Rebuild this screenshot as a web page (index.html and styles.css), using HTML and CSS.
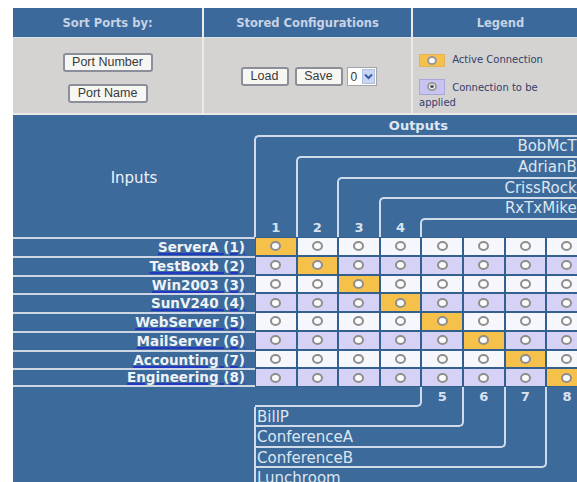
FILE: index.html
```html
<!DOCTYPE html>
<html lang="en">
<head>
<meta charset="utf-8">
<title>Port Matrix</title>
<link rel="stylesheet" href="styles.css">
</head>
<body>
<div class="page">
  <div class="panel">
    <div class="ph">Sort Ports by:</div>
    <div class="ph sep">Stored Configurations</div>
    <div class="ph sep">Legend</div>

    <div class="pb sort">
      <button class="btn btn-num">Port Number</button>
      <button class="btn btn-name">Port Name</button>
    </div>
    <div class="pb sep stored">
      <button class="btn btn-load">Load</button>
      <button class="btn btn-save">Save</button>
      <span class="sel"><span class="sel-val">0</span><span class="sel-arrow"><svg width="9" height="7" viewBox="0 0 9 7"><path d="M1 1.5 L4.5 5 L8 1.5" fill="none" stroke="#3a5aa8" stroke-width="2"/></svg></span></span>
    </div>
    <div class="pb sep legend">
      <div class="lg"><span class="sw sw-active"><i class="ring"></i></span> Active Connection</div>
      <div class="lg lg2"><span class="sw sw-pending"><i class="ring ring-dot"></i></span> Connection to be applied</div>
    </div>
  </div>

  <div class="matrix">
    <div class="inputs-head">Inputs</div>
    <div class="outputs-head">Outputs</div>

    <!-- output brackets above the grid -->
    <div class="tbox t1"></div>
    <div class="tbox t2"></div>
    <div class="tbox t3"></div>
    <div class="tbox t4"></div>
    <div class="tbox t5"></div>
    <div class="olab o1">BobMcT</div>
    <div class="olab o2">AdrianB</div>
    <div class="olab o3">CrissRock</div>
    <div class="olab o4">RxTxMike</div>
    <div class="num n1">1</div>
    <div class="num n2">2</div>
    <div class="num n3">3</div>
    <div class="num n4">4</div>

    <!-- input rows -->
    <div class="row r1 light">
      <div class="in"><a href="#">ServerA (1)</a></div>
      <div class="c on"><i></i></div><div class="c"><i></i></div><div class="c"><i></i></div><div class="c"><i></i></div><div class="c"><i></i></div><div class="c"><i></i></div><div class="c"><i></i></div><div class="c"><i></i></div>
    </div>
    <div class="row r2 lav">
      <div class="in"><a href="#">TestBoxb (2)</a></div>
      <div class="c"><i></i></div><div class="c on"><i></i></div><div class="c"><i></i></div><div class="c"><i></i></div><div class="c"><i></i></div><div class="c"><i></i></div><div class="c"><i></i></div><div class="c"><i></i></div>
    </div>
    <div class="row r3 light">
      <div class="in"><a href="#">Win2003 (3)</a></div>
      <div class="c"><i></i></div><div class="c"><i></i></div><div class="c on"><i></i></div><div class="c"><i></i></div><div class="c"><i></i></div><div class="c"><i></i></div><div class="c"><i></i></div><div class="c"><i></i></div>
    </div>
    <div class="row r4 lav">
      <div class="in"><a href="#">SunV240 (4)</a></div>
      <div class="c"><i></i></div><div class="c"><i></i></div><div class="c"><i></i></div><div class="c on"><i></i></div><div class="c"><i></i></div><div class="c"><i></i></div><div class="c"><i></i></div><div class="c"><i></i></div>
    </div>
    <div class="row r5 light">
      <div class="in"><a href="#">WebServer (5)</a></div>
      <div class="c"><i></i></div><div class="c"><i></i></div><div class="c"><i></i></div><div class="c"><i></i></div><div class="c on"><i></i></div><div class="c"><i></i></div><div class="c"><i></i></div><div class="c"><i></i></div>
    </div>
    <div class="row r6 lav">
      <div class="in"><a href="#">MailServer (6)</a></div>
      <div class="c"><i></i></div><div class="c"><i></i></div><div class="c"><i></i></div><div class="c"><i></i></div><div class="c"><i></i></div><div class="c on"><i></i></div><div class="c"><i></i></div><div class="c"><i></i></div>
    </div>
    <div class="row r7 light">
      <div class="in"><a href="#">Accounting (7)</a></div>
      <div class="c"><i></i></div><div class="c"><i></i></div><div class="c"><i></i></div><div class="c"><i></i></div><div class="c"><i></i></div><div class="c"><i></i></div><div class="c on"><i></i></div><div class="c"><i></i></div>
    </div>
    <div class="row r8 lav last">
      <div class="in"><a href="#">Engineering (8)</a></div>
      <div class="c"><i></i></div><div class="c"><i></i></div><div class="c"><i></i></div><div class="c"><i></i></div><div class="c"><i></i></div><div class="c"><i></i></div><div class="c"><i></i></div><div class="c on"><i></i></div>
    </div>

    <!-- output brackets below the grid -->
    <div class="num n5">5</div>
    <div class="num n6">6</div>
    <div class="num n7">7</div>
    <div class="num n8">8</div>
    <div class="bbox b4"></div>
    <div class="bbox b5"></div>
    <div class="bbox b6"></div>
    <div class="bbox b7"></div>
    <div class="blab l1">BillP</div>
    <div class="blab l2">ConferenceA</div>
    <div class="blab l3">ConferenceB</div>
    <div class="blab l4">Lunchroom</div>
  </div>
</div>
</body>
</html>
```

FILE: styles.css
```css
html, body {
  margin: 0;
  padding: 0;
  background: #ffffff;
}

body {
  width: 577px;
  height: 482px;
  overflow: hidden;
  font-family: "DejaVu Sans", Verdana, sans-serif;
}

.page {
  margin: 8px 0 0 13px;
  width: 575px;
}

/* ---------- control panel ---------- */
.panel {
  display: grid;
  grid-template-columns: 189px 209px 177px;
  grid-template-rows: 30px 77px;
}

.ph {
  background: #3b699b;
  color: #c7d3e5;
  font-size: 11.5px;
  font-weight: bold;
  display: flex;
  align-items: center;
  justify-content: center;
  border-bottom: 1px solid #d9e1ea;
  box-sizing: border-box;
}

.sep {
  border-left: 2px solid #ecebea;
}

.pb {
  background: #d4d3d1;
  border-bottom: 2px solid #eceae6;
  box-sizing: border-box;
}

.btn {
  font-family: "Liberation Sans", Arial, sans-serif;
  font-size: 12.5px;
  color: #3a3a3a;
  background: #f6f6f2;
  border: 2px solid #8c8e99;
  border-radius: 3px;
  height: 19px;
  padding: 0;
  line-height: 15px;
  box-sizing: border-box;
}

.sort {
  display: flex;
  flex-direction: column;
  align-items: center;
  padding-top: 15px;
  gap: 12px;
}

.btn-num { width: 90px; }
.btn-name { width: 80px; }

.stored {
  display: flex;
  align-items: center;
  justify-content: center;
  padding: 2px 0 0 2px;
}

.btn-load { width: 48px; margin-right: 6px; }
.btn-save { width: 48px; margin-right: 4px; }

.sel {
  display: inline-flex;
  align-items: center;
  width: 30px;
  height: 19px;
  box-sizing: border-box;
  background: #ffffff;
  border: 1px solid #a5a5a5;
  font-family: "Liberation Sans", Arial, sans-serif;
  font-size: 12px;
  color: #333;
}

.sel-val {
  flex: 1;
  padding-left: 3px;
}

.sel-arrow {
  width: 13px;
  height: 15px;
  margin-right: 1px;
  background: #c9d6f2;
  border: 1px solid #b0c0e2;
  box-sizing: border-box;
  display: flex;
  align-items: center;
  justify-content: center;
}

.legend {
  padding: 15px 24px 0 6px;
  font-size: 10px;
  line-height: 13px;
  color: #33406c;
}

.lg2 {
  margin-top: 13px;
}

.sw {
  display: inline-flex;
  align-items: center;
  justify-content: center;
  width: 26px;
  box-sizing: border-box;
  vertical-align: middle;
  margin-right: 4px;
}

.sw-active {
  height: 13px;
  background: #f5c04c;
  border: 1px solid #e4b35a;
}

.sw-pending {
  height: 16px;
  background: #c8c4f2;
  border: 1px solid #a9a6dc;
  position: relative;
  top: -1px;
}

.ring {
  display: block;
  width: 10px;
  height: 9px;
  box-sizing: border-box;
  border: 2px solid #9a9a9a;
  border-radius: 50%;
  background: #ffffff;
}

.ring-dot {
  background: radial-gradient(circle, #55586a 0 1.5px, #ffffff 2px);
}

/* ---------- routing matrix ---------- */
.matrix {
  --cols: 242px repeat(8, 41.6px);
  display: grid;
  grid-template-columns: var(--cols);
  grid-template-rows: 20px 21px 21px 20px 21px 19px repeat(8, 18.75px) 20px 20px 21px 20px 21px;
  background: #3c6a9b;
  color: #dde6f0;
}

.inputs-head {
  grid-column: 1;
  grid-row: 1 / 7;
  display: flex;
  align-items: center;
  justify-content: center;
  font-size: 15px;
  color: #eef2f7;
  padding-top: 3px;
}

.outputs-head {
  grid-column: 2 / -1;
  grid-row: 1;
  text-align: center;
  font-size: 13px;
  font-weight: bold;
  line-height: 22px;
  color: #dfe7f1;
  padding-right: 6px;
}

.tbox {
  border-left: 2px solid #cfdaea;
  border-top: 2px solid #cfdaea;
  border-top-left-radius: 5px;
  margin-left: -1px;
}

.t1 { grid-column: 2 / -1; grid-row: 2 / 7; }
.t2 { grid-column: 3 / -1; grid-row: 3 / 7; }
.t3 { grid-column: 4 / -1; grid-row: 4 / 7; }
.t4 { grid-column: 5 / -1; grid-row: 5 / 7; }
.t5 { grid-column: 6 / -1; grid-row: 6 / 7; }

.olab {
  grid-column: 2 / -1;
  text-align: right;
  padding-right: 11px;
  font-size: 15px;
  line-height: 23px;
  white-space: nowrap;
  overflow: hidden;
}

.o1 { grid-row: 2; }
.o2 { grid-row: 3; }
.o3 { grid-row: 4; }
.o4 { grid-row: 5; }

.num {
  text-align: center;
  font-size: 13px;
  font-weight: bold;
  color: #d9e2ee;
  line-height: 20px;
}

.n1 { grid-column: 2; grid-row: 6; }
.n2 { grid-column: 3; grid-row: 6; }
.n3 { grid-column: 4; grid-row: 6; }
.n4 { grid-column: 5; grid-row: 6; }
.n5 { grid-column: 6; grid-row: 15; }
.n6 { grid-column: 7; grid-row: 15; }
.n7 { grid-column: 8; grid-row: 15; }
.n8 { grid-column: 9; grid-row: 15; }

.row {
  grid-column: 1 / -1;
  display: grid;
  grid-template-columns: var(--cols);
}

.r1 { grid-row: 7; }
.r2 { grid-row: 8; }
.r3 { grid-row: 9; }
.r4 { grid-row: 10; }
.r5 { grid-row: 11; }
.r6 { grid-row: 12; }
.r7 { grid-row: 13; }
.r8 { grid-row: 14; }

.in {
  border-top: 2px solid #cdd6e2;
  text-align: right;
  padding-right: 10px;
  font-size: 13.5px;
  font-weight: bold;
  line-height: 16px;
  white-space: nowrap;
  box-sizing: border-box;
}

.last .in {
  border-bottom: 2px solid #cdd6e2;
  line-height: 15px;
}

.in a {
  color: #eef2f8;
  text-decoration: underline;
  text-decoration-color: #2436c4;
  text-decoration-thickness: 2px;
  text-underline-offset: 1px;
}

.c {
  border: 1px solid #33618f;
  display: flex;
  align-items: center;
  justify-content: center;
}

.light .c { background: #f5f7fc; }
.lav .c { background: #d6d2f5; }
.row .c.on { background: #f6c14b; }

.c i {
  display: block;
  width: 11px;
  height: 10px;
  box-sizing: border-box;
  border: 2px solid #8e8e8e;
  border-radius: 50%;
  background: #fcfcfc;
}

.bbox {
  border-right: 2px solid #cfdaea;
  border-bottom: 2px solid #cfdaea;
  border-bottom-right-radius: 5px;
  margin-right: -1px;
}

.b4 { grid-column: 2 / 6; grid-row: 15 / 16; }
.b5 { grid-column: 2 / 7; grid-row: 15 / 17; }
.b6 { grid-column: 2 / 8; grid-row: 15 / 18; }
.b7 { grid-column: 2 / 9; grid-row: 15 / 19; }

.blab {
  grid-column: 2 / -1;
  border-left: 2px solid #cfdaea;
  margin-left: -1px;
  padding-left: 1px;
  font-size: 15px;
  line-height: 21px;
  white-space: nowrap;
}

.l1 { grid-row: 16; }
.l2 { grid-row: 17; }
.l3 { grid-row: 18; }
.l4 { grid-row: 19; }
```
